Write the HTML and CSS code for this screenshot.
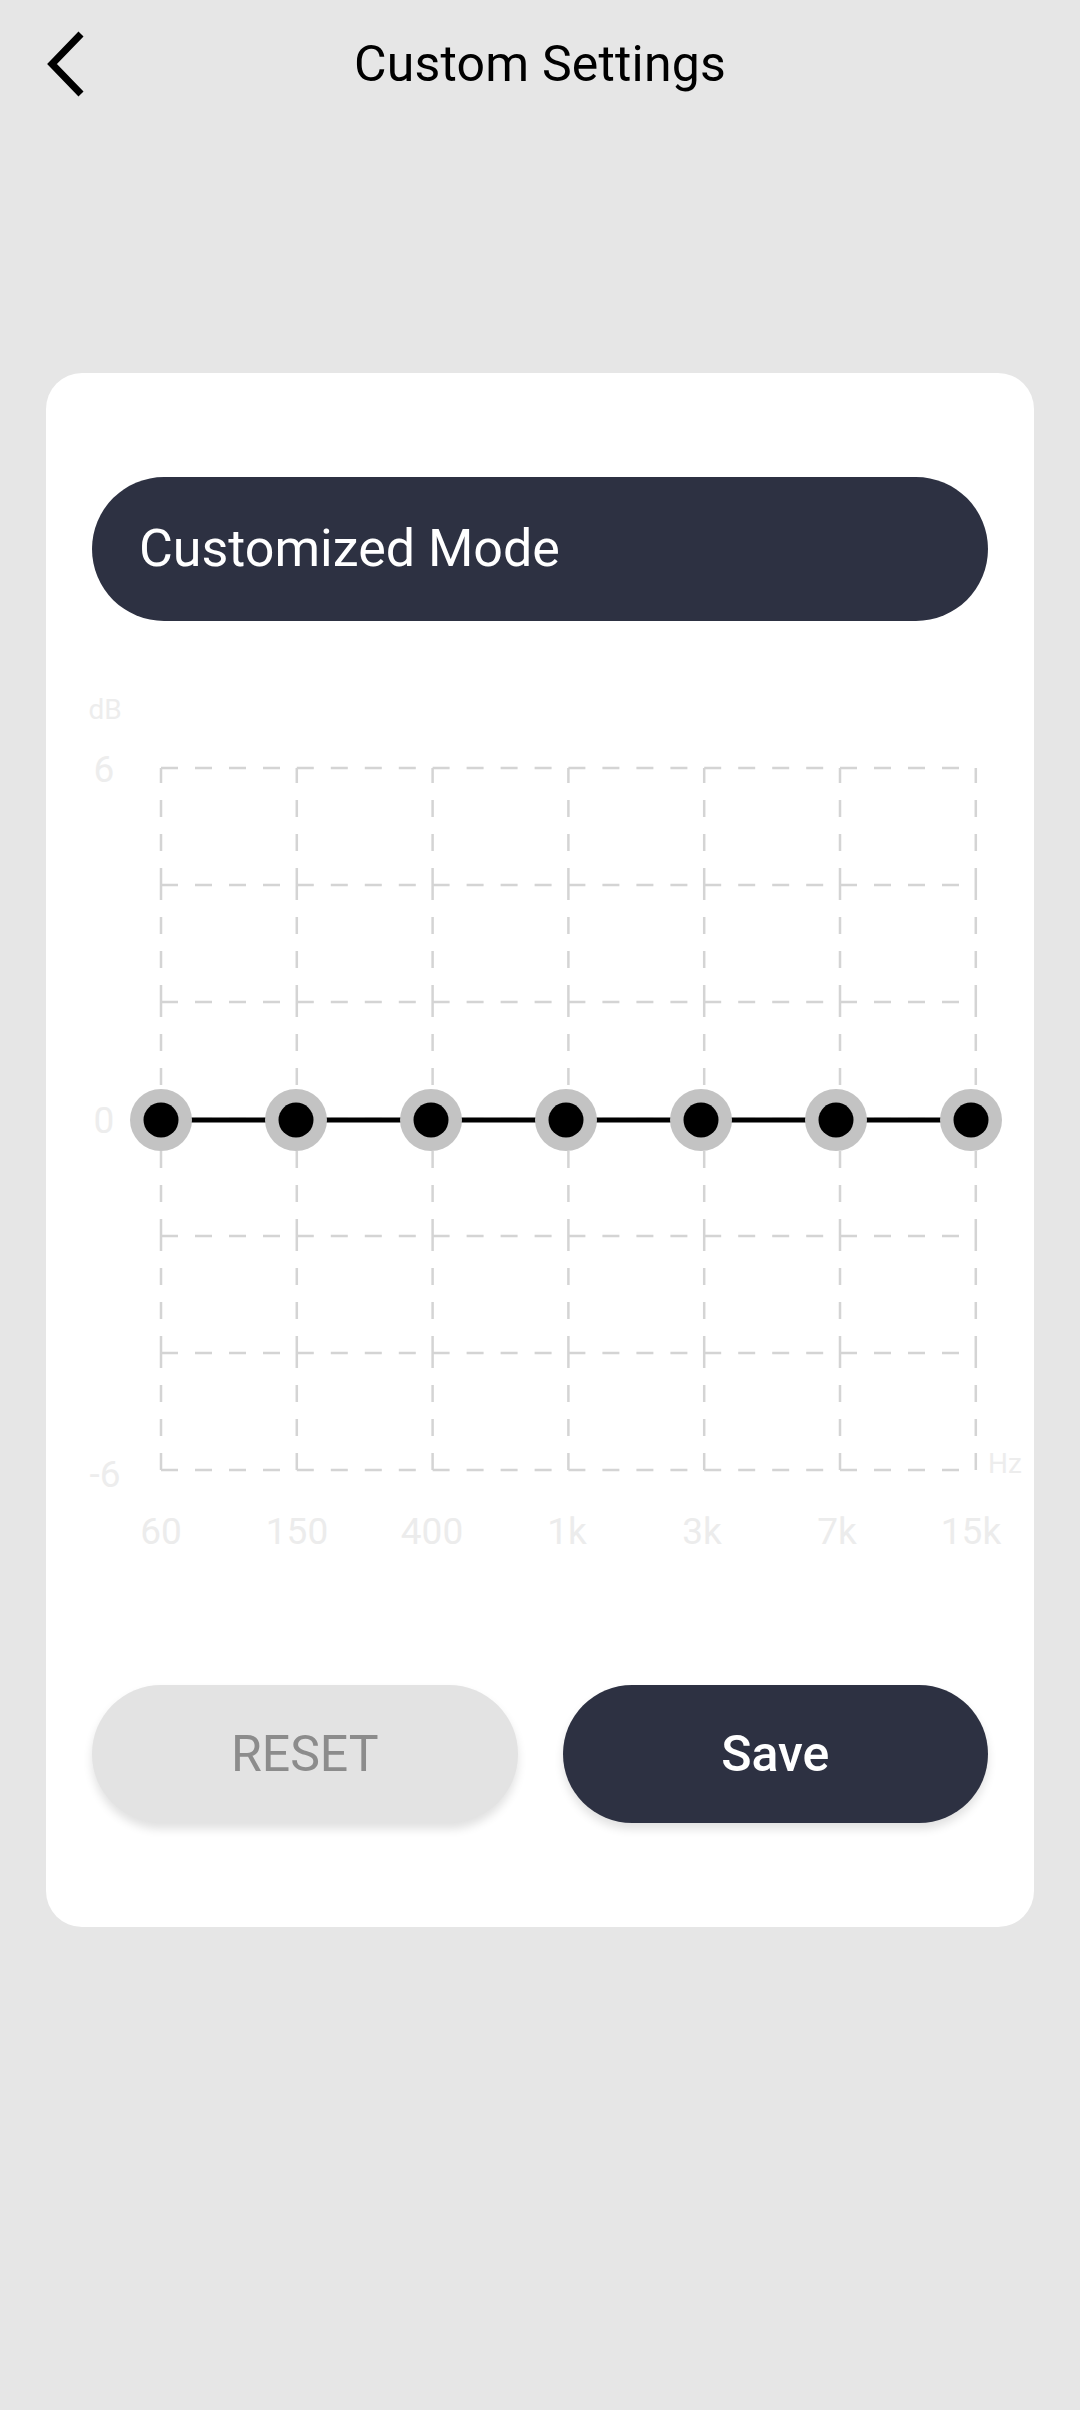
FILE: index.html
```html
<!DOCTYPE html>
<html lang="en">
<head>
    <meta charset="UTF-8">
    <meta name="viewport" content="width=device-width, initial-scale=1.0">
    <title>Custom Settings</title>
    <link rel="stylesheet" href="styles.css">
</head>
<body>
    <header class="topbar">
        <a class="back-btn" href="#" aria-label="Back">
            <svg width="44" height="72" viewBox="0 0 44 72">
                <polyline points="37,6 8,36 37,66" fill="none" stroke="#000" stroke-width="7" stroke-linejoin="miter"/>
            </svg>
        </a>
        <h1 class="title">Custom Settings</h1>
        <span></span>
    </header>

    <main class="card">
        <div class="mode-pill">Customized Mode</div>

        <!-- EQ chart, drawn in page coordinates -->
        <svg class="eq-chart" width="896" height="1064" viewBox="92 621 896 1064">
            <defs>
                <path id="grid-row" d="M161 0h135.8M296.8 0h135.8M432.6 0h135.8M568.4 0h135.8M704.2 0h135.8M840 0h135.8"/>
                <path id="grid-col" d="M0 885V768M0 1002V885M0 1119V1002M0 1236V1119M0 1353V1236M0 1470V1353"/>
            </defs>
            <g class="grid">
                <use href="#grid-row" y="768"/>
                <use href="#grid-row" y="885"/>
                <use href="#grid-row" y="1002"/>
                <use href="#grid-row" y="1119"/>
                <use href="#grid-row" y="1236"/>
                <use href="#grid-row" y="1353"/>
                <use href="#grid-row" y="1470"/>
                <use href="#grid-col" x="161"/>
                <use href="#grid-col" x="296.8"/>
                <use href="#grid-col" x="432.6"/>
                <use href="#grid-col" x="568.4"/>
                <use href="#grid-col" x="704.2"/>
                <use href="#grid-col" x="840"/>
                <use href="#grid-col" x="975.8"/>
            </g>

            <g class="axis">
                <text x="105" y="719" class="unit">dB</text>
                <text x="104" y="782" class="db">6</text>
                <text x="104" y="1133" class="db">0</text>
                <text x="105" y="1487" class="db">-6</text>
                <text x="1005" y="1473" class="unit">Hz</text>
                <text x="161" y="1544" class="freq">60</text>
                <text x="297" y="1544" class="freq">150</text>
                <text x="432" y="1544" class="freq">400</text>
                <text x="567" y="1544" class="freq">1k</text>
                <text x="702" y="1544" class="freq">3k</text>
                <text x="837" y="1544" class="freq">7k</text>
                <text x="971" y="1544" class="freq">15k</text>
            </g>

            <line x1="161" y1="1120" x2="971" y2="1120" class="curve"/>

            <g class="knob"><circle cx="161" cy="1120" r="31" class="ring"/><circle cx="161" cy="1120" r="17.5"/></g>
            <g class="knob"><circle cx="296" cy="1120" r="31" class="ring"/><circle cx="296" cy="1120" r="17.5"/></g>
            <g class="knob"><circle cx="431" cy="1120" r="31" class="ring"/><circle cx="431" cy="1120" r="17.5"/></g>
            <g class="knob"><circle cx="566" cy="1120" r="31" class="ring"/><circle cx="566" cy="1120" r="17.5"/></g>
            <g class="knob"><circle cx="701" cy="1120" r="31" class="ring"/><circle cx="701" cy="1120" r="17.5"/></g>
            <g class="knob"><circle cx="836" cy="1120" r="31" class="ring"/><circle cx="836" cy="1120" r="17.5"/></g>
            <g class="knob"><circle cx="971" cy="1120" r="31" class="ring"/><circle cx="971" cy="1120" r="17.5"/></g>
        </svg>

        <div class="actions">
            <button class="btn btn-reset">RESET</button>
            <button class="btn btn-save">Save</button>
        </div>
    </main>
</body>
</html>
```

FILE: styles.css
```css
body {
    margin: 0;
    min-height: 2410px;
    background-color: #e6e6e6;
    font-family: Roboto, "Noto Sans", Arial, sans-serif;
    color: #000;
}

/* Верхняя панель */
.topbar {
    display: grid;
    grid-template-columns: 1fr auto 1fr;
    align-items: center;
    height: 128px;
}

.back-btn {
    display: flex;
    align-items: center;
    padding-left: 44px;
}

.back-btn svg {
    display: block;
}

.title {
    margin: 0;
    font-size: 50px;
    font-weight: 400;
    line-height: 128px;
    letter-spacing: 0.2px;
}

/* Карточка */
.card {
    margin: 245px 46px 0;
    padding: 104px 46px;
    background: #fff;
    border-radius: 36px;
}

.mode-pill {
    height: 144px;
    line-height: 144px;
    padding-left: 47px;
    border-radius: 72px;
    background-color: #2d3142;
    color: #fff;
    font-size: 52px;
}

.eq-chart {
    display: block;
    overflow: visible;
}

.grid {
    fill: none;
    stroke: #d4d4d4;
    stroke-width: 2.5;
    stroke-dasharray: 17 17;
}

.axis text {
    font-family: Roboto, Arial, sans-serif;
    fill: #ededed;
    text-anchor: middle;
}

.axis .unit {
    font-size: 28px;
}

.axis .db {
    font-size: 37px;
}

.axis .freq {
    font-size: 37px;
    fill: #ececec;
}

.curve {
    stroke: #000;
    stroke-width: 5;
}

.knob circle {
    fill: #000;
}

.knob .ring {
    fill: #c3c3c3;
}

/* Кнопки */
.actions {
    display: grid;
    grid-template-columns: 1fr 1fr;
    gap: 45px;
}

.btn {
    height: 138px;
    border: 0;
    border-radius: 69px;
    font-family: Roboto, Arial, sans-serif;
    font-size: 50px;
    cursor: pointer;
    box-shadow: 0 6px 10px rgba(0, 0, 0, 0.12);
}

.btn-reset {
    background-color: #e3e3e3;
    color: #8c8c8c;
    font-weight: 400;
}

.btn-save {
    background-color: #2d3142;
    color: #fff;
    font-weight: 500;
}
```
